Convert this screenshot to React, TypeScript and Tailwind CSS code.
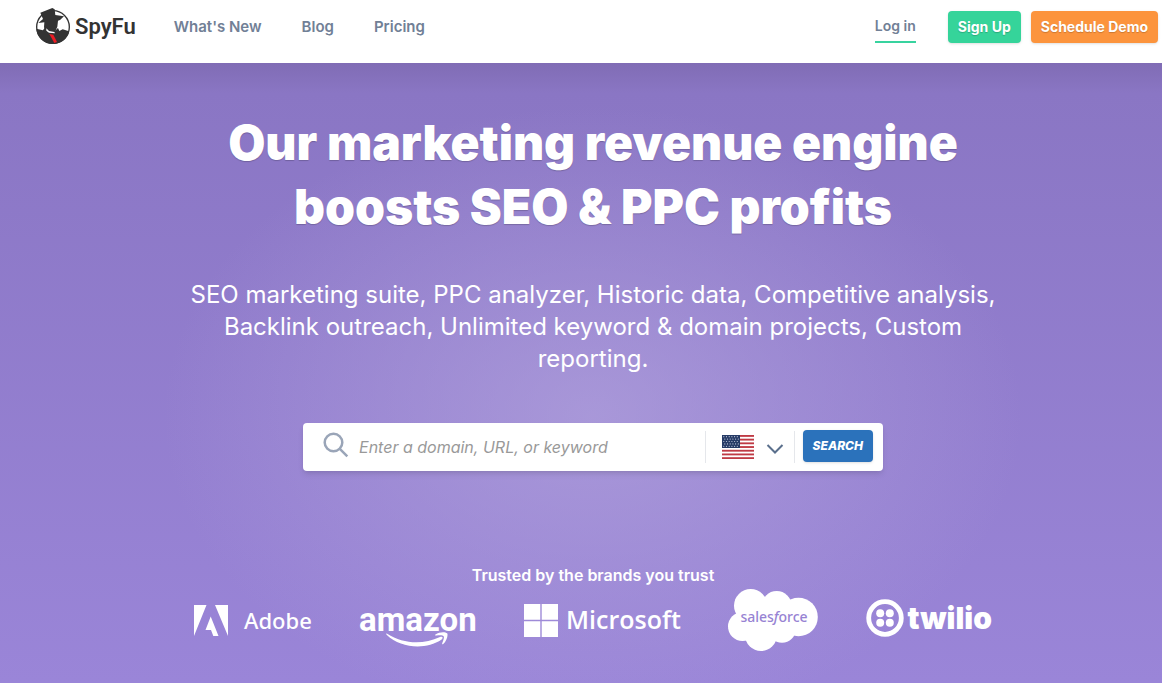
import { useState } from "react";

const links = ["What's New", "Blog", "Pricing"];

function SpyMark() {
    return (
        <svg viewBox="9 8 108 111" className="h-[37px] w-9">
            <circle cx="63" cy="65" r="49" fill="#fff" stroke="#333" strokeWidth="4" />
            <path fill="#333" d="m25 22 36-14 7 4 2 17 26 4-12 11-6 2-2 18-6 14-14 6-14-6-6-12 1-15-18 2 14-12z" />
            <path
                fill="#333"
                d="m13 70 20 5 6-9 8 9 12 5 10-4 9-8 4 9 10-5 19 6c-4 24-24 38-49 38-26 0-47-20-49-46z"
            />
            <path fill="#fff" d="m43 69 8 8 16 3 2 4-18-2-8-6z" />
            <path fill="#ed1c24" d="m52 86 12 2 11 22-8 3z" />
        </svg>
    );
}

function Flag() {
    return (
        <svg viewBox="0 0 32 24" className="h-6 w-8">
            <rect width="32" height="24" fill="#fff" />
            {[0, 1, 2, 3, 4, 5, 6].map((i) => (
                <rect key={i} y={i * 3.7} width="32" height="1.85" fill="#bf3a44" />
            ))}
            <rect width="18" height="13" fill="#263b66" />
            {[0, 1, 2, 3, 4].map((row) =>
                [0, 1, 2, 3, 4, 5].map((col) => (
                    <circle
                        key={`${row}-${col}`}
                        cx={1.8 + col * 2.7 + (row % 2)}
                        cy={1.7 + row * 2.4}
                        r="0.6"
                        fill="#c3cbdc"
                    />
                )),
            )}
        </svg>
    );
}

function Adobe() {
    return (
        <div className="flex items-center gap-4">
            <svg viewBox="0 0 34 31" className="h-[31px] w-[34px]" fill="#fff">
                <path d="M0 0h12.500L0 31zM21 0h13v31zM16.700 11.500 24.500 31h-5.200l-2.300-6h-5.500z" />
            </svg>
            <span className="font-['Noto_Sans',sans-serif] text-[22px] font-medium">Adobe</span>
        </div>
    );
}

function Amazon() {
    return (
        <div className="flex flex-col items-center pt-2.5">
            <span className="font-[Roboto,sans-serif] text-[33px] leading-8 font-bold">amazon</span>
            <svg viewBox="586 139 190 46" className="-mt-1 h-[15px] w-[63px]" fill="#fff">
                <path d="M588 144c50 32 110 34 162 10 8-3 11 3 5 8-50 34-126 26-168-14-3-3-2-5 1-4z" />
                <path d="M736 147c12-9 30-9 36-4 4 7-3 25-12 33-3 2-4 0-3-3 3-8 7-18 4-21-3-4-14-3-22-2-4 0-5-1-3-3z" />
            </svg>
        </div>
    );
}

function Microsoft() {
    return (
        <div className="flex items-center gap-2">
            <svg viewBox="0 0 34 33" className="h-[33px] w-[34px]" fill="#fff">
                <path d="M0 0h16.300v15.800H0zM17.700 0H34v15.800H17.700zM0 17.200h16.300V33H0zM17.700 17.200H34V33H17.700z" />
            </svg>
            <span className="font-['Open_Sans',sans-serif] text-[25px] font-semibold">Microsoft</span>
        </div>
    );
}

function Salesforce() {
    return (
        <svg viewBox="0 0 90 62" className="h-[62px] w-[90px]">
            <g fill="#fff">
                <circle cx="22.700" cy="16.700" r="16.700" />
                <circle cx="48.700" cy="17" r="15" />
                <circle cx="70.500" cy="28" r="19.300" />
                <circle cx="54" cy="40" r="13.800" />
                <circle cx="33" cy="46" r="16" />
                <circle cx="14.500" cy="37.500" r="14.500" />
                <path d="M12 20h60v22H12z" />
            </g>
            <text
                x="46"
                y="33"
                textAnchor="middle"
                fill="#9783d3"
                className="font-['Noto_Sans',sans-serif] text-sm font-medium"
            >
                sales<tspan fontStyle="italic">f</tspan>orce
            </text>
        </svg>
    );
}

function Twilio() {
    return (
        <div className="flex items-center gap-1 pb-1">
            <svg viewBox="0 0 38 38" className="h-[38px] w-[38px]" fill="#fff">
                <circle cx="19" cy="19" r="16.300" fill="none" stroke="#fff" strokeWidth="4.800" />
                <circle cx="14.200" cy="14.200" r="4" />
                <circle cx="23.800" cy="14.200" r="4" />
                <circle cx="14.200" cy="23.800" r="4" />
                <circle cx="23.800" cy="23.800" r="4" />
            </svg>
            <span className="text-3xl font-black">twilio</span>
        </div>
    );
}

export default function App() {
    const [query, setquery] = useState("");

    return (
        <div className="flex min-h-screen flex-col font-[Inter,sans-serif]">
            <header className="flex h-[63px] items-start justify-between bg-white pr-1 pl-[35px]">
                <div className="flex">
                    <a href="#" className="mt-2 flex items-center gap-1 text-[#333]">
                        <SpyMark />
                        <span className="font-[Roboto,sans-serif] text-[22px] font-semibold">SpyFu</span>
                    </a>
                    <nav className="mt-[15px] ml-[38px] flex gap-10 text-[15px] leading-6 font-semibold text-[#718096]">
                        {links.map((link) => (
                            <a key={link} href="#">
                                {link}
                            </a>
                        ))}
                    </nav>
                </div>
                <div className="mt-[11px] flex gap-2.5 text-sm font-bold text-white">
                    <a
                        href="#"
                        className="mr-[22px] flex h-8 items-center border-b-2 border-[#38d39f] font-semibold text-[#718096]"
                    >
                        Log in
                    </a>
                    <button className="h-8 rounded-sm bg-[#35d49a] px-2.5 shadow-sm text-shadow-xs">
                        Sign Up
                    </button>
                    <button className="h-8 rounded-sm bg-[#fc943d] px-2.5 shadow-sm text-shadow-xs">
                        Schedule Demo
                    </button>
                </div>
            </header>

            <main className="flex grow flex-col items-center bg-[radial-gradient(ellipse_430px_310px_at_51%_57%,rgba(180,165,222,0.65),transparent),linear-gradient(#806cb5,#8a76c4_30px,#9a85d8)] pt-12 pl-6 text-center text-white">
                <h1 className="max-w-[800px] text-5xl leading-16 font-black text-shadow-xs">
                    Our marketing revenue engine boosts SEO &amp; PPC profits
                </h1>
                <p className="mt-10 max-w-[832px] text-2xl leading-8 font-normal">
                    SEO marketing suite, PPC analyzer, Historic data, Competitive analysis, Backlink
                    outreach, Unlimited keyword &amp; domain projects, Custom reporting.
                </p>

                <form
                    className="mt-12 flex h-12 w-full max-w-[580px] items-center rounded-sm bg-white pr-2.5 pl-5 shadow-md"
                    onSubmit={(e) => e.preventDefault()}
                >
                    <svg viewBox="0 0 26 26" className="mb-1 h-[26px] w-[26px]" fill="none" stroke="#9aa5b8" strokeWidth="2.500">
                        <circle cx="10.500" cy="10.500" r="8.800" />
                        <path d="m16.800 16.800 7.500 7.500" />
                    </svg>
                    <input
                        type="text"
                        aria-label="Domain, URL, or keyword"
                        placeholder="Enter a domain, URL, or keyword"
                        className="ml-2.5 min-w-0 grow text-base italic text-gray-700 outline-none placeholder:text-[#999]"
                        value={query}
                        onChange={(e) => setquery(e.target.value)}
                    />
                    <button
                        type="button"
                        aria-label="Country"
                        className="mr-2 flex h-8 items-center gap-3 border-x border-gray-200 pr-2.5 pl-4"
                    >
                        <Flag />
                        <svg viewBox="0 0 18 12" className="mt-1 h-3 w-[18px]" fill="none" stroke="#5a6f8c" strokeWidth="2">
                            <path d="m1.500 2 7.500 7.500L16.500 2" />
                        </svg>
                    </button>
                    <button className="mb-0.5 h-8 rounded-sm bg-[#2b72bb] px-2.5 text-xs font-extrabold italic shadow-sm">
                        SEARCH
                    </button>
                </form>

                <h2 className="mt-[92px] text-base leading-6 font-semibold">Trusted by the brands you trust</h2>
                <div className="mt-0.5 flex w-full max-w-[798px] items-center justify-between">
                    <Adobe />
                    <Amazon />
                    <Microsoft />
                    <Salesforce />
                    <Twilio />
                </div>
            </main>
        </div>
    );
}
